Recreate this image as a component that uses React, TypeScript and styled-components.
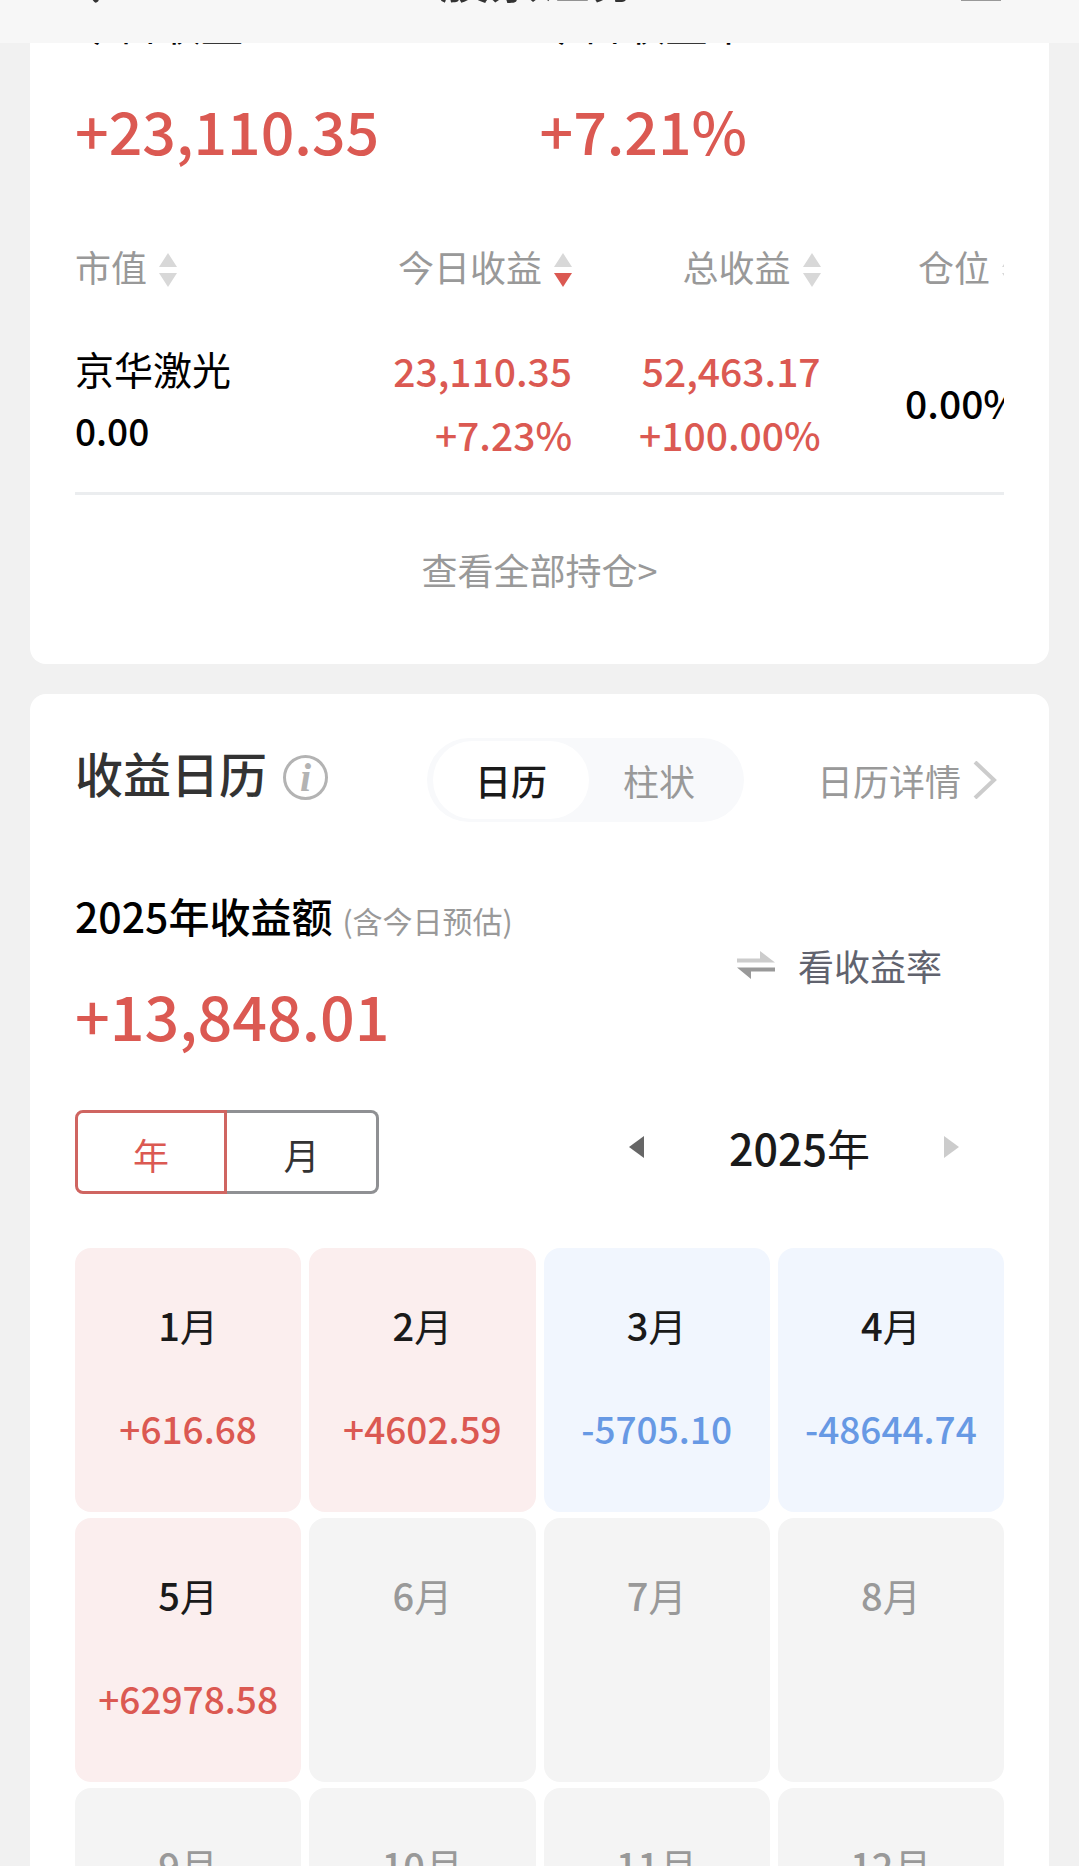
import React, { useState } from "react";
import styled, { createGlobalStyle } from "styled-components";

const color = {
  page: "#f1f1f1",
  header: "#f7f7f7",
  gain: "#db5952",
  loss: "#6799e4",
  text: "#1a1a1a",
  title: "#333333",
  muted: "#999999",
  faint: "#cccccc",
};

const GlobalStyle = createGlobalStyle`
  * { box-sizing: border-box; }
  body {
    margin: 0;
    background: ${color.page};
    color: #000;
    font-family: "Noto Sans CJK SC", "Noto Sans", sans-serif;
    font-size: 36px;
  }
  button { margin: 0; padding: 0; border: 0; background: none; color: inherit; font: inherit; }
  a { color: inherit; text-decoration: none; }
  h1, h2, h3, p, ol { margin: 0; padding: 0; font: inherit; list-style: none; }
`;

const Screen = styled.div`
  display: flex;
  flex-direction: column;
  height: 100vh;
  overflow: hidden;
`;

const Header = styled.header`
  flex: none;
  display: grid;
  grid-template-columns: 1fr auto 1fr;
  align-content: end;
  align-items: end;
  height: 43px;
  padding: 0 78px 35px;
  overflow: hidden;
  background: ${color.header};
`;

const HeaderTitle = styled.h1`
  color: ${color.title};
  font-size: 50px;
  font-weight: 500;
  line-height: 64px;
`;

const HeaderButton = styled.button<{ $end?: boolean }>`
  display: flex;
  justify-self: ${(p) => (p.$end ? "end" : "start")};
  padding-bottom: ${(p) => (p.$end ? "7px" : "5px")};
`;

const Content = styled.main`
  flex: 1;
  display: flex;
  flex-direction: column;
  gap: 30px;
  padding: 0 30px;
  overflow: hidden auto;
  scrollbar-width: none;
`;

const Card = styled.section<{ $first?: boolean }>`
  flex: none;
  padding: ${(p) => (p.$first ? "0 45px 70px" : "44px 45px 57px")};
  border-radius: ${(p) => (p.$first ? "0 0 16px 16px" : "16px")};
  background: #fff;
`;

const Totals = styled.div`
  display: grid;
  grid-template-columns: 1fr 1fr;
`;

const TotalLabel = styled.p`
  display: flex;
  align-items: flex-end;
  height: 10px;
  overflow: hidden;
  font-size: 42px;
  line-height: 60px;
`;

const BigNumber = styled.p`
  color: ${color.gain};
  font-size: 59px;
  font-weight: 500;
  line-height: 72px;
`;

const Total = styled.div`
  display: flex;
  flex-direction: column;
  gap: 41px;
`;

const TableScroller = styled.div`
  margin-top: 70px;
  overflow: hidden;
  border-bottom: 3px solid #ebedef;
`;

const Table = styled.table`
  width: calc(100% + 16px);
  border-collapse: collapse;
  table-layout: fixed;
`;

const HeadCell = styled.th<{ $width: string }>`
  width: ${(p) => p.$width};
  height: 60px;
  padding: 0;
  color: ${color.muted};
  font-weight: 400;
  text-align: right;
  &:first-child { text-align: left; }
`;

const SortButton = styled.button`
  display: inline-flex;
  align-items: center;
  gap: 12px;
  height: 60px;
  line-height: 60px;
  vertical-align: top;
  white-space: nowrap;
`;

const SortMark = styled.svg`
  margin-top: 8px;
`;

const Cell = styled.td<{ $gain?: boolean }>`
  padding: 42px 0 26px;
  color: ${(p) => (p.$gain ? color.gain : "#000")};
  font-size: 39px;
  font-weight: 500;
  line-height: 64px;
  text-align: right;
`;

const NameCell = styled.th`
  padding: 38px 0 28px;
  font-size: 39px;
  font-weight: 400;
  line-height: 62px;
  text-align: left;
`;

const Line = styled.div``;

const MarketValue = styled.div`
  font-size: 37px;
  font-weight: 500;
`;

const AllHoldings = styled.a`
  display: block;
  margin-top: 49px;
  color: ${color.muted};
  line-height: 50px;
  text-align: center;
`;

const CalendarHeader = styled.div`
  display: flex;
  align-items: center;
  height: 84px;
`;

const TitleGroup = styled.div`
  align-self: flex-start;
  display: flex;
  align-items: flex-end;
  gap: 16px;
  padding-top: 6px;
`;

const CalendarTitle = styled.h2`
  color: ${color.title};
  font-size: 48px;
  font-weight: 500;
  line-height: 56px;
`;

const InfoButton = styled.button`
  width: 45px;
  height: 45px;
  border: 3px solid #b3b3b3;
  border-radius: 50%;
  color: #b3b3b3;
  font: italic bold 40px/36px "Liberation Serif", serif;
  text-align: center;
`;

const ViewTabs = styled.div`
  display: grid;
  grid-template-columns: 156px 140px;
  height: 84px;
  margin-left: 99px;
  padding: 3px 15px 3px 6px;
  border-radius: 42px;
  background: #f8f9fb;
`;

const ViewTab = styled.button<{ $active: boolean }>`
  border-radius: 39px;
  background: ${(p) => (p.$active ? "#fff" : "transparent")};
  color: ${(p) => (p.$active ? color.text : color.muted)};
  font-weight: ${(p) => (p.$active ? 500 : 400)};
`;

const DetailLink = styled.a`
  display: flex;
  align-items: center;
  gap: 12px;
  margin-left: auto;
  padding-right: 7px;
  color: ${color.muted};
`;

const YearSummary = styled.div`
  display: flex;
  align-items: center;
  justify-content: space-between;
  margin-top: 61px;
`;

const SummaryTitle = styled.h3`
  display: flex;
  align-items: baseline;
  gap: 10px;
  height: 64px;
  margin-bottom: 36px;
  font-size: 41px;
  font-weight: 500;
  line-height: 64px;
`;

const Estimate = styled.small`
  color: ${color.muted};
  font-size: 30px;
  font-weight: 400;
  line-height: 40px;
`;

const YearTotal = styled(BigNumber)`
  font-size: 61px;
  line-height: 64px;
`;

const RateButton = styled.button`
  display: flex;
  align-items: center;
  gap: 23px;
  margin-right: 62px;
  color: #61636e;
`;

const PeriodRow = styled.div`
  display: flex;
  align-items: flex-start;
  justify-content: space-between;
  margin-top: 63px;
`;

const PeriodToggle = styled.div`
  display: flex;
  height: 84px;
`;

const PeriodButton = styled.button<{ $active: boolean }>`
  width: 152px;
  padding-top: 3px;
  border: 3px solid ${(p) => (p.$active ? "#cf6561" : "#8f9093")};
  color: ${(p) => (p.$active ? color.gain : color.title)};
  &:first-child {
    border-radius: 8px 0 0 8px;
    border-right-width: ${(p) => (p.$active ? "3px" : "0")};
  }
  &:last-child {
    border-radius: 0 8px 8px 0;
    border-left-width: ${(p) => (p.$active ? "3px" : "0")};
  }
`;

const YearNav = styled.div`
  display: flex;
  align-items: center;
  gap: 74px;
  height: 74px;
  margin-right: 45px;
`;

const YearLabel = styled.span`
  min-width: 152px;
  color: ${color.text};
  font-size: 43px;
  line-height: 72px;
  text-align: right;
`;

const Digits = styled.span`
  font-weight: 500;
`;

const StepButton = styled.button`
  display: flex;
  color: #666;
  &:disabled { color: ${color.faint}; }
`;

const MonthGrid = styled.ol`
  display: grid;
  grid-template-columns: repeat(4, 1fr);
  gap: 6px 8px;
  margin-top: 54px;
`;

type Tone = "gain" | "loss" | "none";
const toneBackground = { gain: "#fbeeee", loss: "#f1f6fe", none: "#f4f4f4" };
const toneValue = { gain: color.gain, loss: color.loss, none: color.muted };

const MonthCell = styled.li<{ $tone: Tone }>`
  display: flex;
  flex-direction: column;
  align-items: center;
  gap: 47px;
  min-height: 264px;
  padding-top: 49px;
  border-radius: 16px;
  background: ${(p) => toneBackground[p.$tone]};
  color: ${(p) => (p.$tone === "none" ? color.muted : color.text)};
  font-size: 38px;
  line-height: 56px;
`;

const MonthValue = styled.span<{ $tone: Tone }>`
  color: ${(p) => toneValue[p.$tone]};
  font-size: 37px;
  font-weight: 500;
`;

const columns = [
  { label: "市值", width: "26.3%" },
  { label: "今日收益", width: "26.3%", sorted: true },
  { label: "总收益", width: "26.3%" },
  { label: "仓位", width: "21.1%" },
];

const months = ["+616.68", "+4602.59", "-5705.10", "-48644.74", "+62978.58", "", "", "", "", "", "", ""];

const toneOf = (value: string): Tone =>
  value === "" ? "none" : value.startsWith("-") ? "loss" : "gain";

function SortIcon({ down }: { down?: boolean }) {
  return (
    <SortMark width="18" height="34" viewBox="0 0 18 34" aria-hidden="true">
      <path d="M9 0 18 14H0Z" fill="#d8d8d8" />
      <path d="M0 20H18L9 34Z" fill={down ? color.gain : "#d8d8d8"} />
    </SortMark>
  );
}

function SwapIcon() {
  return (
    <svg width="38" height="28" viewBox="0 0 38 28" aria-hidden="true">
      <path d="M0 7.5H23V0L38 11.5H0Z" fill="#cccccc" />
      <path d="M38 16.5V20.5H14V28L0 16.5Z" fill="#999999" />
    </svg>
  );
}

export default function App() {
  const [view, setView] = useState("日历");
  const [period, setPeriod] = useState("年");

  return (
    <Screen>
      <GlobalStyle />
      <Header>
        <HeaderButton aria-label="返回">
          <svg width="22" height="40" viewBox="0 0 22 40" aria-hidden="true">
            <path d="M18 3 3 20 18 37" fill="none" stroke={color.title} strokeWidth="5" strokeLinecap="round" />
          </svg>
        </HeaderButton>
        <HeaderTitle>股票证券</HeaderTitle>
        <HeaderButton $end aria-label="菜单">
          <svg width="40" height="36" viewBox="0 0 40 36" aria-hidden="true">
            <path d="M0 2H40M0 18H40M0 34H40" stroke={color.muted} strokeWidth="4" />
          </svg>
        </HeaderButton>
      </Header>

      <Content>
        <Card $first>
          <Totals>
            <Total>
              <TotalLabel>今日收益</TotalLabel>
              <BigNumber>+23,110.35</BigNumber>
            </Total>
            <Total>
              <TotalLabel>今日收益率</TotalLabel>
              <BigNumber>+7.21%</BigNumber>
            </Total>
          </Totals>

          <TableScroller>
            <Table>
              <thead>
                <tr>
                  {columns.map((c) => (
                    <HeadCell key={c.label} $width={c.width} scope="col">
                      <SortButton>
                        {c.label}
                        <SortIcon down={c.sorted} />
                      </SortButton>
                    </HeadCell>
                  ))}
                </tr>
              </thead>
              <tbody>
                <tr>
                  <NameCell scope="row">
                    <Line>京华激光</Line>
                    <MarketValue>0.00</MarketValue>
                  </NameCell>
                  <Cell $gain>
                    <Line>23,110.35</Line>
                    <Line>+7.23%</Line>
                  </Cell>
                  <Cell $gain>
                    <Line>52,463.17</Line>
                    <Line>+100.00%</Line>
                  </Cell>
                  <Cell>0.00%</Cell>
                </tr>
              </tbody>
            </Table>
          </TableScroller>
          <AllHoldings href="#holdings">查看全部持仓&gt;</AllHoldings>
        </Card>

        <Card>
          <CalendarHeader>
            <TitleGroup>
              <CalendarTitle>收益日历</CalendarTitle>
              <InfoButton aria-label="说明">i</InfoButton>
            </TitleGroup>
            <ViewTabs>
              {["日历", "柱状"].map((name) => (
                <ViewTab key={name} $active={view === name} aria-pressed={view === name} onClick={() => setView(name)}>
                  {name}
                </ViewTab>
              ))}
            </ViewTabs>
            <DetailLink href="#detail">
              日历详情
              <svg width="24" height="38" viewBox="0 0 24 38" aria-hidden="true">
                <path d="M2 1 21 19 2 37" fill="none" stroke={color.faint} strokeWidth="4" />
              </svg>
            </DetailLink>
          </CalendarHeader>

          <YearSummary>
            <div>
              <SummaryTitle>
                2025年收益额
                <Estimate>(含今日预估)</Estimate>
              </SummaryTitle>
              <YearTotal>+13,848.01</YearTotal>
            </div>
            <RateButton>
              <SwapIcon />
              看收益率
            </RateButton>
          </YearSummary>

          <PeriodRow>
            <PeriodToggle>
              {["年", "月"].map((name) => (
                <PeriodButton
                  key={name}
                  $active={period === name}
                  aria-pressed={period === name}
                  onClick={() => setPeriod(name)}
                >
                  {name}
                </PeriodButton>
              ))}
            </PeriodToggle>
            <YearNav>
              <StepButton aria-label="上一年">
                <svg width="15" height="22" viewBox="0 0 15 22" aria-hidden="true">
                  <path d="M15 0V22L0 11Z" fill="currentColor" />
                </svg>
              </StepButton>
              <YearLabel>
                <Digits>2025</Digits>年
              </YearLabel>
              <StepButton aria-label="下一年" disabled>
                <svg width="15" height="22" viewBox="0 0 15 22" aria-hidden="true">
                  <path d="M0 0V22L15 11Z" fill="currentColor" />
                </svg>
              </StepButton>
            </YearNav>
          </PeriodRow>

          <MonthGrid>
            {months.map((value, i) => (
              <MonthCell key={i} $tone={toneOf(value)}>
                <span>
                  <Digits>{i + 1}</Digits>月
                </span>
                {value && <MonthValue $tone={toneOf(value)}>{value}</MonthValue>}
              </MonthCell>
            ))}
          </MonthGrid>
        </Card>
      </Content>
    </Screen>
  );
}
